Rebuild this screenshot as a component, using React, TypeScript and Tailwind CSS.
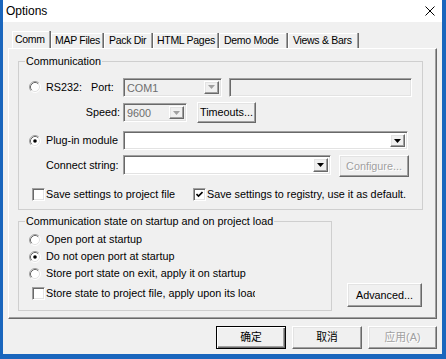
import React from 'react';

const sunken =
  'border-t border-l border-t-[#a0a0a0] border-l-[#a0a0a0] border-r border-b border-r-white border-b-white shadow-[inset_1px_1px_0_#696969,inset_-1px_-1px_0_#e3e3e3]';
const raised =
  'border-t border-l border-t-white border-l-white border-r border-b border-r-[#696969] border-b-[#696969] shadow-[inset_-1px_-1px_0_#a0a0a0,inset_1px_1px_0_#e3e3e3]';

const Radio = ({ checked = false }: { checked?: boolean }) => (
  <svg width="12" height="12" viewBox="0 0 12 12" className="shrink-0">
    <circle cx="6" cy="6" r="5" fill="#fff" />
    <path d="M9.89 2.11 A5.5 5.5 0 0 0 2.11 9.89" fill="none" stroke="#a0a0a0" />
    <path d="M9.18 2.82 A4.5 4.5 0 0 0 2.82 9.18" fill="none" stroke="#696969" />
    <path d="M2.11 9.89 A5.5 5.5 0 0 0 9.89 2.11" fill="none" stroke="#fff" />
    <path d="M2.82 9.18 A4.5 4.5 0 0 0 9.18 2.82" fill="none" stroke="#e3e3e3" />
    {checked && <circle cx="6" cy="6" r="1.8" fill="#000" />}
  </svg>
);

const Check = ({ checked = false }: { checked?: boolean }) => (
  <div className={`flex h-[13px] w-[13px] shrink-0 items-center justify-center bg-white ${sunken}`}>
    {checked && (
      <svg width="7" height="7" viewBox="0 0 7 7">
        <path d="M0.5 3 L2.5 5 L6.5 1" fill="none" stroke="#000" strokeWidth="1.6" />
      </svg>
    )}
  </div>
);

const Arrow = ({ disabled = false }: { disabled?: boolean }) => (
  <div className={`flex h-full w-[15px] shrink-0 items-center justify-center bg-[#f0f0f0] ${raised}`}>
    <svg width="7" height="4" viewBox="0 0 7 4">
      <polygon points="0,0 7,0 3.5,4" fill={disabled ? '#a0a0a0' : '#000'} />
    </svg>
  </div>
);

const Button = ({
  label,
  className,
  disabled = false,
  primary = false,
}: {
  label: string;
  className: string;
  disabled?: boolean;
  primary?: boolean;
}) => (
  <div
    className={`flex shrink-0 items-center justify-center bg-[#f0f0f0] ${
      primary
        ? 'border border-black shadow-[inset_1px_1px_0_#fff,inset_-1px_-1px_0_#696969,inset_-2px_-2px_0_#a0a0a0]'
        : raised
    } ${disabled ? 'text-[#a0a0a0] [text-shadow:1px_1px_0_#fff]' : 'text-black'} ${className}`}
  >
    {label}
  </div>
);

const tabs = [
  { name: 'MAP Files', cls: 'w-[53px] pl-[4px]' },
  { name: 'Pack Dir', cls: 'w-[49px] pl-[5px]' },
  { name: 'HTML Pages', cls: 'w-[66px] pl-[4px]' },
  { name: 'Demo Mode', cls: 'w-[69px] pl-[5px]' },
  { name: 'Views & Bars', cls: 'w-[71px] pl-[5px]' },
];

export default function App() {
  return (
    <div className="h-[359px] w-[446px] overflow-hidden bg-[#1a66bd] pt-0 pr-[4px] pb-[5px] pl-[3px] font-['Liberation_Sans','Noto_Sans_CJK_SC',sans-serif] text-[10.8px] text-black">
      <div className="flex h-[354px] w-[439px] flex-col bg-[#f0f0f0]">
        {/* title bar */}
        <div className="flex h-[22px] items-center justify-between bg-white pl-[3px] pr-[7px]">
          <span className="text-[12px]">Options</span>
          <svg width="10" height="10" viewBox="0 0 10 10">
            <path d="M0.5 0.5 L9.5 9.5 M9.5 0.5 L0.5 9.5" stroke="#000" strokeWidth="1" />
          </svg>
        </div>

        {/* tabs */}
        <div className="mt-[9px] ml-[9px] flex h-[17px] items-end whitespace-nowrap text-[10.5px] tracking-[-0.3px]">
          <div className="flex h-[17px] w-[39px] items-center border-r border-r-[#696969] pl-[3px] shadow-[inset_-1px_0_0_#a0a0a0,inset_1px_1px_0_#fff]">
            Comm
          </div>
          {tabs.map((t) => (
            <div
              key={t.name}
              className={`flex h-[15px] items-center border-r border-r-[#696969] shadow-[inset_-1px_0_0_#a0a0a0,inset_1px_1px_0_#fff] ${t.cls}`}
            >
              {t.name}
            </div>
          ))}
        </div>

        {/* tab page */}
        <div className="ml-[5px] h-[271px] w-[429px] border-t border-l border-t-white border-l-white border-r border-b border-r-[#696969] border-b-[#696969] pl-[9px] shadow-[inset_-1px_-1px_0_#a0a0a0]">
          <fieldset className="mt-[6px] h-[155px] w-[405px] border border-[#cfcfcf]">
            <legend className="ml-[6px] h-[13px] px-[1px] leading-[13px]">Communication</legend>

            <div className="mt-[9px] flex h-[20px] items-center">
              <div className="ml-[10px] flex w-[62px] items-center">
                <Radio />
                <span className="ml-[5px]">RS232:</span>
              </div>
              <span className="w-[32px]">Port:</span>
              <div className={`flex h-[19px] w-[99px] items-stretch bg-[#f0f0f0] p-[2px] ${sunken}`}>
                <span className="flex-1 pl-[1px] leading-[15px] text-[#6d6d6d]">COM1</span>
                <Arrow disabled />
              </div>
              <div className={`ml-[7px] h-[19px] w-[183px] bg-[#f0f0f0] ${sunken}`} />
            </div>

            <div className="mt-[5px] flex h-[21px] items-center">
              <span className="w-[104px] pr-[3px] text-right">Speed:</span>
              <div className={`flex h-[19px] w-[64px] items-stretch bg-[#f0f0f0] p-[2px] ${sunken}`}>
                <span className="flex-1 pl-[1px] leading-[15px] text-[#6d6d6d]">9600</span>
                <Arrow disabled />
              </div>
              <Button label="Timeouts..." className="ml-[10px] h-[21px] w-[59px]" />
            </div>

            <div className="mt-[8px] flex h-[19px] items-center">
              <div className="ml-[10px] flex w-[94px] items-center">
                <Radio checked />
                <span className="ml-[5px]">Plug-in module</span>
              </div>
              <div className={`flex h-[19px] w-[285px] items-stretch bg-white p-[2px] ${sunken}`}>
                <span className="flex-1" />
                <Arrow />
              </div>
            </div>

            <div className="mt-[5px] flex h-[22px] items-start">
              <span className="w-[104px] pl-[27px] leading-[20px]">Connect string:</span>
              <div className={`flex h-[20px] w-[208px] items-stretch bg-white p-[2px] ${sunken}`}>
                <span className="flex-1" />
                <Arrow />
              </div>
              <Button label="Configure..." disabled className="ml-[8px] h-[22px] w-[70px]" />
            </div>

            <div className="mt-[11px] flex h-[13px] items-center">
              <div className="ml-[13px] flex w-[161px] items-center">
                <Check />
                <span className="ml-[1px]">Save settings to project file</span>
              </div>
              <Check checked />
              <span className="ml-[1px]">Save settings to registry, use it as default.</span>
            </div>
          </fieldset>

          <div className="mt-[5px] flex items-end">
            <fieldset className="h-[96px] w-[314px] border border-[#cfcfcf]">
              <legend className="ml-[6px] h-[13px] px-[1px] leading-[13px]">
                Communication state on startup and on project load
              </legend>
              <div className="mt-[3px] ml-[10px] flex h-[17px] items-center">
                <Radio />
                <span className="ml-[5px]">Open port at startup</span>
              </div>
              <div className="ml-[10px] flex h-[17px] items-center">
                <Radio checked />
                <span className="ml-[5px]">Do not open port at startup</span>
              </div>
              <div className="ml-[10px] flex h-[17px] items-center">
                <Radio />
                <span className="ml-[5px]">Store port state on exit, apply it on startup</span>
              </div>
              <div className="mt-[5px] ml-[13px] flex h-[13px] w-[223px] items-center overflow-hidden whitespace-nowrap">
                <Check />
                <span className="ml-[1px]">Store state to project file, apply upon its load</span>
              </div>
            </fieldset>
            <Button label="Advanced..." className="mb-[4px] ml-[15px] h-[24px] w-[75px]" />
          </div>
        </div>

        {/* dialog buttons */}
        <div className="mt-[7px] flex justify-end gap-[6px] pr-[5px]">
          <Button label="确定" primary className="h-[23px] w-[70px]" />
          <Button label="取消" className="h-[23px] w-[70px]" />
          <Button label="应用(A)" disabled className="h-[23px] w-[69px]" />
        </div>
      </div>
    </div>
  );
}
